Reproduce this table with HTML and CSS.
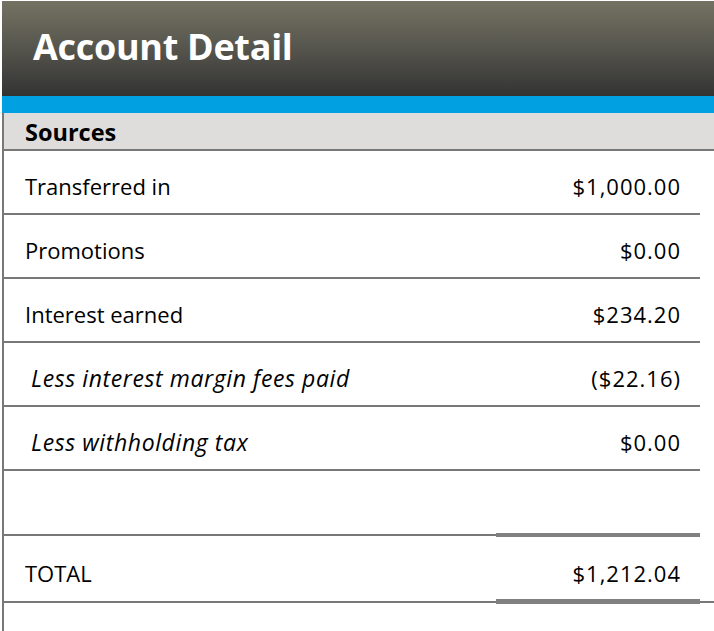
FILE: index.html
```html
<!DOCTYPE html>
<html lang="en">
<head>
<meta charset="utf-8">
<title>Account Detail</title>
<link rel="stylesheet" href="styles.css">
</head>
<body>
<div class="page">
  <header class="header">
    <h1 class="title">Account Detail</h1>
  </header>
  <div class="accent"></div>
  <section class="sheet">
    <div class="section-head">Sources</div>
    <div class="row">
      <span class="label">Transferred in</span>
      <span class="amount">$1,000.00</span>
    </div>
    <div class="row">
      <span class="label">Promotions</span>
      <span class="amount">$0.00</span>
    </div>
    <div class="row">
      <span class="label">Interest earned</span>
      <span class="amount">$234.20</span>
    </div>
    <div class="row">
      <span class="label label-less">Less interest margin fees paid</span>
      <span class="amount">($22.16)</span>
    </div>
    <div class="row">
      <span class="label label-less">Less withholding tax</span>
      <span class="amount">$0.00</span>
    </div>
    <div class="row row-empty"></div>
    <div class="row row-total">
      <span class="label">TOTAL</span>
      <span class="amount amount-total">$1,212.04</span>
    </div>
  </section>
</div>
</body>
</html>
```

FILE: styles.css
```css
html, body {
  margin: 0;
  padding: 0;
  background: #ffffff;
}

body {
  font-family: "Open Sans", "Noto Sans", sans-serif;
  color: #000000;
}

.page {
  display: flex;
  flex-direction: column;
  min-height: 100vh;
  padding: 1px 0 0 2px;
  box-sizing: border-box;
}

.header {
  height: 95px;
  background: linear-gradient(to bottom, #747262 0%, #5c5b52 40%, #333333 100%);
  display: flex;
  align-items: center;
  padding: 0 0 4px 31px;
  box-sizing: border-box;
}

.title {
  margin: 0;
  font-size: 36px;
  font-weight: 700;
  color: #ffffff;
  letter-spacing: -0.3px;
}

.accent {
  height: 17px;
  background: #01a0e0;
}

.sheet {
  flex: 1;
  border-left: 2px solid #787878;
  display: flex;
  flex-direction: column;
}

.section-head {
  height: 38px;
  background: #dedddb;
  border-bottom: 2px solid #787878;
  display: flex;
  align-items: center;
  padding: 1px 0 0 21px;
  box-sizing: border-box;
  font-size: 23.5px;
  font-weight: 700;
}

.row {
  height: 62px;
  border-bottom: 2px solid #787878;
  margin-right: 14px;
  display: flex;
  align-items: stretch;
  font-size: 22px;
}

.label {
  flex: 1;
  display: flex;
  align-items: center;
  padding: 8px 0 0 21px;
}

.label-less {
  font-style: italic;
  font-size: 23px;
  letter-spacing: 0.6px;
  padding-left: 27px;
}

.amount {
  width: 204px;
  display: flex;
  align-items: center;
  justify-content: flex-end;
  padding: 8px 19px 0 0;
  box-sizing: border-box;
  letter-spacing: 1px;
}

.row-empty {
  height: 63px;
}

.row-total {
  height: 65px;
  margin-right: 0;
  padding-right: 14px;
}

.amount-total {
  margin: -3px 0 -3px 0;
  border-top: 4px solid #808080;
  border-bottom: 5px solid #808080;
  padding-top: 9px;
}
```
